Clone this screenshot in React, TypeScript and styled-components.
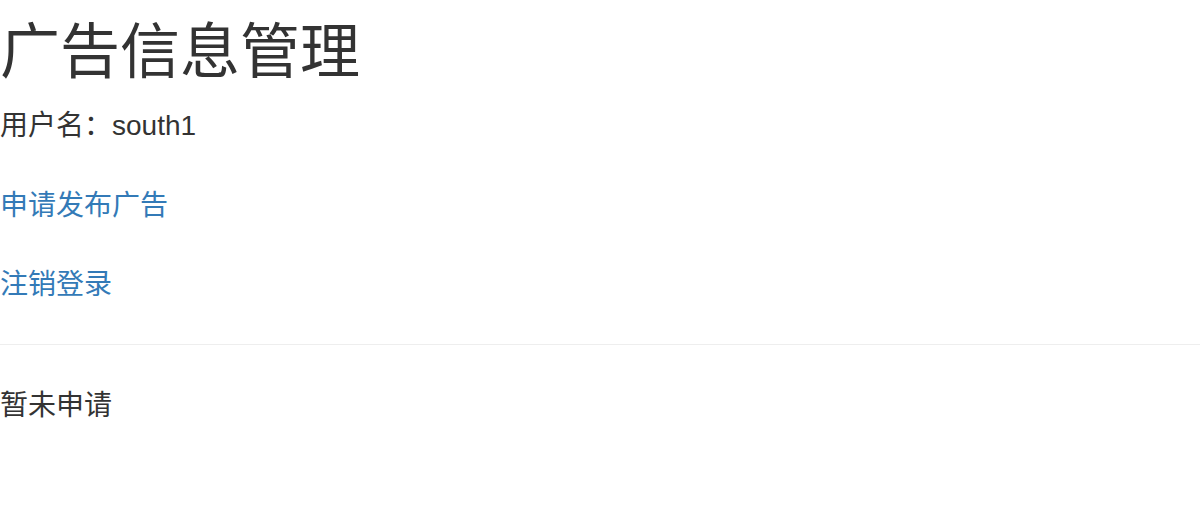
import React from "react";
import styled, { createGlobalStyle } from "styled-components";

const Global = createGlobalStyle`
  html, body { margin: 0; padding: 0; background: #fff; }
  body {
    font-family: "Liberation Sans", "Noto Sans CJK SC", Arial, sans-serif;
    color: #333;
  }
`;

const Page = styled.div`
  display: flex;
  flex-direction: column;
`;

const Title = styled.h1`
  margin: 20px 0 20px;
  font-size: 60px;
  font-weight: 400;
  line-height: 66px;
  color: #333;
`;

const Line = styled.div`
  font-size: 28px;
  line-height: 40px;
  margin-bottom: 40px;
`;

const Link = styled.a`
  display: block;
  font-size: 28px;
  line-height: 40px;
  margin-bottom: 39px;
  color: #337ab7;
  text-decoration: none;
`;

const Rule = styled.hr`
  margin: 0 0 41px;
  border: 0;
  border-top: 1px solid #eee;
  height: 0;
`;

export default function App() {
  return (
    <>
      <Global />
      <Page>
        <Title>广告信息管理</Title>
        <Line>用户名：south1</Line>
        <Link href="#">申请发布广告</Link>
        <Link href="#">注销登录</Link>
        <Rule />
        <Line>暂未申请</Line>
      </Page>
    </>
  );
}
